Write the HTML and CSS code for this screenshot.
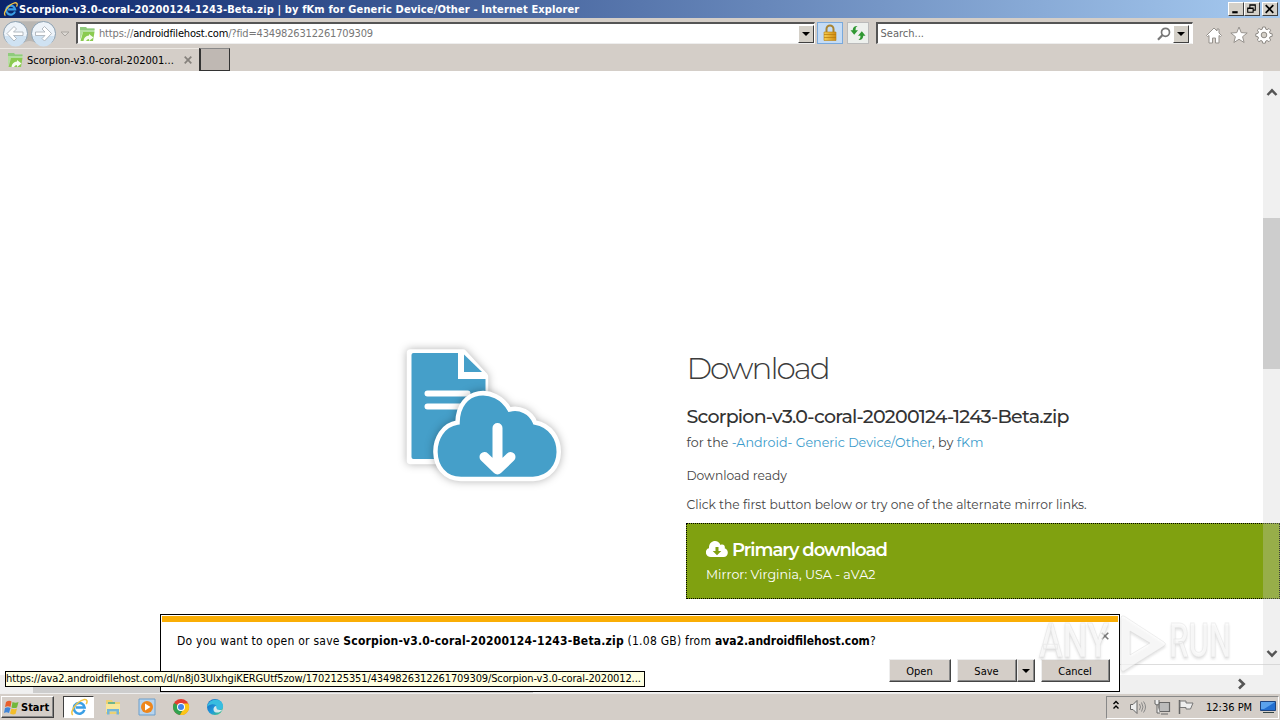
FILE: index.html
```html
<!DOCTYPE html>
<html lang="en">
<head>
<meta charset="utf-8">
<title>Scorpion-v3.0-coral-20200124-1243-Beta.zip</title>
<link rel="stylesheet" href="styles.css">
</head>
<body>
<svg width="0" height="0" class="defs">
  <defs>
    <linearGradient id="gold" x1="0" x2="1"><stop offset="0" stop-color="#f6cf52"/><stop offset="1" stop-color="#d08a10"/></linearGradient>
    <linearGradient id="edge" x1="0" y1="0" x2="1" y2="1"><stop offset="0" stop-color="#1b5fb8"/><stop offset=".55" stop-color="#1e9bdc"/><stop offset="1" stop-color="#4ccf70"/></linearGradient>
    <symbol id="ie" viewBox="0 0 20 20">
      <path d="M16 13.300A6 6 0 1 1 16.200 10.500H6.500" fill="none" stroke="#3a9fe6" stroke-width="2.800"/>
      <path d="M3.200 18.800C-1 16 7 4 15.500 1.800c4-.9 4 2.600 2.500 5" fill="none" stroke="#f3c544" stroke-width="1.700"/>
    </symbol>
    <symbol id="site" viewBox="0 0 16 16">
      <path d="M1 1h6l1 1.500h7.500V6H4L1 14z" fill="#b4dfa0"/><path d="M1 1h6l1 1.500h7.500V4H1z" fill="#8fcb7c"/>
      <path d="M1.500 15L4 6h11.500L14 15z" fill="#8acb50"/><path d="M4.500 15q.5-5 5.500-5.500V8l4.500 3.500L10 15v-2q-2 0-3 2z" fill="#f6fcf0"/>
    </symbol>
  </defs>
</svg>
<div class="desktop">
  <header class="titlebar">
    <svg class="title-icon"><use href="#ie"/></svg>
    <span class="title-text">Scorpion-v3.0-coral-20200124-1243-Beta.zip | by fKm for Generic Device/Other - Internet Explorer</span>
    <div class="window-buttons">
      <i class="wb"><svg viewBox="0 0 12 11"><path d="M3 8.500h5" stroke="#000" stroke-width="2"/></svg></i>
      <i class="wb"><svg viewBox="0 0 12 11"><path d="M4.500 4V1.500h5v5H8M4 2h6M2.500 4.500h5v4h-5zM2 5h6" fill="none" stroke="#000"/></svg></i>
      <i class="wb wb-close"><svg viewBox="0 0 12 11"><path d="M2.500 2l7 7M9.500 2l-7 7" stroke="#000" stroke-width="1.600"/></svg></i>
    </div>
  </header>

  <nav class="navbar">
    <svg class="nav-arrows" viewBox="0 0 56 27">
      <path d="M14 1.500C24 1 34 1 42 1.500v24C36 25 34 21 28.500 21S20 26 14 25.500z" fill="#b9b6b2"/>
      <g fill="#edf3f9" stroke="#8a9fb0"><circle cx="14.500" cy="13.500" r="12"/><circle cx="42.500" cy="13.500" r="12"/></g>
      <g fill="#cfe2f2"><path d="M4 16h21a10.500 10.500 0 0 1-21 0zM32 16h21a10.500 10.500 0 0 1-21 0z"/></g>
      <g fill="#fff" stroke="#a3abb3" stroke-width=".8"><path d="M6 13.500l7-7 2.500 2.500-3 3H22v3.500h-9.500l3 3-2.500 2.500z"/><path d="M50.500 13.500l-7-7L41 9l3 3h-9.500v3.500H44l-3 3 2.500 2.500z"/></g>
    </svg>
    <svg class="nav-drop" viewBox="0 0 10 6"><path d="M1 1h8L5 5z" fill="#dedad5" stroke="#aaa6a1"/></svg>
    <div class="field address">
      <svg class="site-icon"><use href="#site"/></svg>
      <span class="url">https://<b>androidfilehost.com</b>/?fid=4349826312261709309</span>
      <i class="drop"></i>
    </div>
    <i class="tool lock"><svg viewBox="0 0 16 18"><path d="M4.500 9V5a3.500 3.500 0 0 1 7 0v4" fill="none" stroke="#a88432" stroke-width="2"/><path d="M2 8h12v8.500H2z" fill="url(#gold)" stroke="#b88213" stroke-width=".6"/><path d="M2 10.500h12M2 13.500h12" stroke="#b67a0c" stroke-width=".7"/></svg></i>
    <i class="tool refresh"><svg viewBox="0 0 16 16"><path d="M7.500 1Q5.200 2 5.500 5.200H8L4.200 9.800.5 5.200h2.200Q3 .8 7.500 1zM8.500 15q2.300-1 2-4.200H8L11.800 6.200l3.700 4.600h-2.200q-.3 4.400-4.800 4.200z" fill="#2f9832"/></svg></i>
    <div class="field search">
      <span class="placeholder">Search...</span>
      <svg class="magnifier" viewBox="0 0 14 14"><circle cx="8.500" cy="5.300" r="4" fill="none" stroke="#777" stroke-width="1.700"/><path d="M5.500 8L1 12.700" stroke="#777" stroke-width="2.200"/></svg>
      <i class="drop"></i>
    </div>
    <div class="page-tools">
      <svg viewBox="0 0 18 18"><path d="M9 2L1.500 9.500l1 1L4 9.500V17h3.500v-5h3v5H14V9.500l1.500 1 1-1L14 7V3h-2v2z" fill="#fff" stroke="#96928d" stroke-width="1"/></svg>
      <svg viewBox="0 0 18 18"><path d="M9 1l2.200 5.600 6 .4-4.600 3.700 1.500 5.800L9 13.300l-5.100 3.200 1.500-5.800L.8 7l6-.4z" fill="#fff" stroke="#96928d"/></svg>
      <svg viewBox="0 0 18 18"><path d="M7.700 1h2.600l.5 2.200 1.300.5L14 2.500 15.700 4.200 14.500 6l.5 1.400 2.200.4v2.500l-2.200.5-.5 1.300 1.200 1.900-1.700 1.700-1.900-1.200-1.300.5-.5 2.200H7.700L7.200 15l-1.300-.5L4 15.700 2.300 14l1.200-1.900L3 10.800l-2.200-.5V7.800L3 7.300 3.500 6 2.300 4.200 4 2.500l1.900 1.200 1.300-.5z" fill="#fff" stroke="#8e8a85"/><circle cx="9" cy="9" r="2.800" fill="#d4d0c8" stroke="#8e8a85"/></svg>
    </div>
  </nav>

  <div class="tabs">
    <div class="tab"><svg class="site-icon"><use href="#site"/></svg><span class="tab-text">Scorpion-v3.0-coral-202001...</span><svg class="tab-x" viewBox="0 0 8 8"><path d="M.7.7l6.600 6.600M7.300.7L.7 7.300" stroke="#85817c" stroke-width="1.700"/></svg></div>
    <i class="new-tab"></i>
  </div>

  <main class="viewport">
    <section class="page">
      <svg class="hero" viewBox="0 0 190 170">
        <path class="sticker" d="M20.500 23h52.500l21.500 23.500v84h-74z" fill="#459fc9" stroke="#fff" stroke-width="7.500" stroke-linejoin="round"/>
        <path d="M21.500 25q0-2 2-2H72l23.500 24v82h-72q-2 0-2-2z" fill="#459fc9"/>
        <path d="M68 21h5l24 23v5H68z" fill="#fff"/>
        <path d="M74 24.500V42h18z" fill="#459fc9"/>
        <path d="M37.500 63.500h40M37.500 76.500h34" stroke="#fff" stroke-width="6" stroke-linecap="round"/>
        <path class="sticker" d="M71 149C37 148.500 38 97 67.500 92.500C68 57 106 55 119.500 79.500C130 77 141 82 145 92.500C177 98 177 147.500 143 149z" fill="#459fc9" stroke="#fff" stroke-width="4.500"/>
        <path d="M107.500 98v40M94.500 127l13 12.500L120.500 127" fill="none" stroke="#fff" stroke-width="10" stroke-linecap="round" stroke-linejoin="round"/>
      </svg>
      <div class="details">
        <h1><span>Download</span></h1>
        <h2><span>Scorpion-v3.0-coral-20200124-1243-Beta.zip</span></h2>
        <p class="for"><span>for the <a>-Android- Generic Device/Other</a>, by <a>fKm</a></span></p>
        <p class="ready"><span>Download ready</span></p>
        <p class="hint"><span>Click the first button below or try one of the alternate mirror links.</span></p>
        <div class="primary">
          <h3><svg viewBox="0 0 22 16"><path d="M5 16C-1.500 16-1.500 8 3 7.200 2.500-.5 12-2.500 14.500 4c3-1.500 5 1 4.200 3.300C23.500 9 22.500 16 17.500 16z" fill="#fff"/><path d="M9.500 6h3v4h2.800L11 14.300 6.700 10h2.800z" fill="#80a110"/></svg><span>Primary download</span></h3>
          <p><span>Mirror: Virginia, USA - aVA2</span></p>
        </div>
        <div class="next-panel"></div>
      </div>
    </section>
    <div class="hscroll"><i class="hthumb"></i><svg viewBox="0 0 10 12"><path d="M2 1.500L6.700 6 2 10.500" fill="none" stroke="#555" stroke-width="2.600"/></svg></div>
    <div class="vscroll">
      <svg viewBox="0 0 12 9"><path d="M1.500 7L6 2.300 10.500 7" fill="none" stroke="#555" stroke-width="2.500"/></svg>
      <i class="thumb"></i>
      <svg class="down" viewBox="0 0 12 9"><path d="M1.500 2L6 6.700 10.500 2" fill="none" stroke="#555" stroke-width="2.500"/></svg>
    </div>
    <div class="prompt">
      <div class="prompt-row"><span class="question">Do you want to open or save <b>Scorpion-v3.0-coral-20200124-1243-Beta.zip</b> (1.08 GB) from <b class="host">ava2.androidfilehost.com</b>?</span>
        <svg class="prompt-x" viewBox="0 0 8 8"><path d="M.7.7l6.600 6.600M7.300.7L.7 7.300" stroke="#777" stroke-width="1.600"/></svg></div>
      <div class="prompt-actions"><i class="btn open">Open</i><i class="btn save">Save</i><i class="btn arrow"></i><i class="btn cancel">Cancel</i></div>
    </div>
    <div class="status"><span>https://ava2.androidfilehost.com/dl/n8j03UlxhgiKERGUtf5zow/1702125351/4349826312261709309/Scorpion-v3.0-coral-2020012...</span></div>
    <svg class="watermark" viewBox="0 0 200 66">
      <text x="3" y="46" textLength="70" lengthAdjust="spacingAndGlyphs">ANY</text>
      <path d="M88 5l40 26q3 2 0 4L88 60q-3 1-3-2V7q0-3 3-2zM94 20v24l20-12z" fill-rule="evenodd"/>
      <text x="133" y="46" textLength="62" lengthAdjust="spacingAndGlyphs">RUN</text>
    </svg>
  </main>

  <footer class="taskbar">
    <div class="start"><svg viewBox="0 0 16 16"><path d="M2 3q3-2 5.500-.5L6.500 8Q4 6.500 1 8z" fill="#e8602c"/><path d="M8.500 3q3 1.500 6 0L13 8.500q-3 1-5.500 0z" fill="#72b83c"/><path d="M1 9q3-1.500 5.500 0L5 14q-2.500-1.500-5 0z" fill="#3f85d8"/><path d="M7.500 9.500q3 1.500 5.500 0L11.500 15Q9 16 6 14.500z" fill="#f2bd29"/></svg><b>Start</b></div>
    <div class="task-active"><svg class="task-ie"><use href="#ie"/></svg></div>
    <div class="quick">
      <svg viewBox="0 0 18 18"><path d="M2 2h6l1 2h7v12H2z" fill="#edd174"/><path d="M2 6h14v8H2z" fill="#f8e79b"/><path d="M3 16.500V11h12v5.500h-2.500v-3h-7v3z" fill="#74b5d8"/><path d="M4 4h7v2H4z" fill="#6fb48d"/></svg>
      <svg viewBox="0 0 18 18"><path d="M1 1h16v16H1z" fill="#b7d4ee" stroke="#6c9fcb"/><circle cx="9" cy="9" r="6" fill="#ee861b"/><path d="M7 5.500l5.500 3.500L7 12.500z" fill="#fff"/></svg>
      <svg viewBox="0 0 18 18"><circle cx="9" cy="9" r="8" fill="#e23d30"/><path d="M2.100 5A8 8 0 0 0 8 17l3.600-6.500L9 9z" fill="#31a350"/><path d="M16.300 5.500A8 8 0 0 1 8 17l4-7V5.500z" fill="#fbc616"/><circle cx="9" cy="9" r="4" fill="#fff"/><circle cx="9" cy="9" r="3" fill="#4285e8"/></svg>
      <svg viewBox="0 0 18 18"><circle cx="9" cy="9" r="8" fill="url(#edge)"/><path d="M1 9C2 3 8 .5 13 2.300c4 1.700 5.500 7 2.500 9-2 1-5 .7-5-1C12 6 5 4.500 1 9z" fill="#37bde0"/><path d="M10.500 9.800c0 2 3 3 6 1.700-2 3.500-8 4.500-9 .5-.3-2 1-4 2.700-4z" fill="#d5e9ec"/></svg>
    </div>
    <div class="tray">
      <svg class="chev" viewBox="0 0 8 10"><path d="M1.500 4L4 1.500 6.500 4M1.500 8.500L4 6l2.500 2.500" fill="none" stroke="#000" stroke-width="1.400"/></svg>
      <svg class="sys" viewBox="0 0 18 16"><path d="M.5 5.500H3L7 1.500v13L3 10.500H.5z" fill="#eee" stroke="#666"/><path d="M9.500 5q2 3 0 6M11.500 3.500q3 4.500 0 9M13.500 2.500q4 5.500 0 11" fill="none" stroke="#888"/></svg>
      <svg class="sys" viewBox="0 0 18 16"><path d="M5 3.500h10.500v9H5zM7 15h7" fill="#bbb" stroke="#666" stroke-width="1.200"/><path d="M1 1v4q2 2 4 0V1M3 6v8h3" fill="#eee" stroke="#666"/></svg>
      <svg class="sys flag" viewBox="0 0 18 16"><path d="M1.500 1v14" stroke="#666" stroke-width="1.500"/><path d="M2 2h6v2h7l-2.500 6H8V8.500H2z" fill="#eee" stroke="#777"/></svg>
      <span class="clock">12:36 PM</span>
      <svg class="desk" viewBox="0 0 16 14"><path d="M.5 1.500h15v9H.5z" fill="#236fd0" stroke="#1e447e"/><path d="M1 2h14L4 9H1z" fill="#5aa2ec"/><path d="M3 12.500h11" stroke="#344"/></svg>
    </div>
  </footer>
</div>
</body>
</html>
```
FILE: styles.css
```css
* { box-sizing: border-box; }
body { margin: 0; overflow: hidden; font-family: "DejaVu Sans Condensed", "DejaVu Sans", sans-serif; font-size: 11px; color: #000; }
i { font-style: normal; }
svg { display: block; flex: none; }
.defs { position: absolute; }
span { white-space: nowrap; }
.desktop { width: 1280px; height: 720px; display: flex; flex-direction: column; background: #d4d0c8; }

.titlebar { height: 18px; display: flex; align-items: center; padding: 0 2px 0 3px; background: linear-gradient(90deg, #0a246a, #a6caf0); color: #fff; font-weight: bold; }
.title-icon { width: 15px; height: 16px; margin-right: 1px; }
.title-text { flex: 1; letter-spacing: .13px; }
.window-buttons { display: flex; }
.wb { width: 16px; height: 14px; background: #d4d0c8; border: 1px solid; border-color: #fff #404040 #404040 #fff; }
.wb svg { width: 13px; height: 12px; }
.wb-close { margin-left: 2px; }

.navbar { height: 30px; display: flex; align-items: flex-start; padding: 4px 7px 0 1px; background: #d4cec8; }
.nav-arrows { width: 56px; height: 27px; margin-top: -2px; }
.nav-drop { width: 10px; height: 6px; margin: 9px 6px 0 3px; }
.field { height: 22px; display: flex; align-items: center; background: #fff; border: 1px solid; border-width: 2px 1px 1px 2px; border-color: #555 #fff #eee #555; }
.address { width: 740px; padding: 0 0 0 1px; }
.site-icon { width: 16px; height: 16px; margin-right: 4px; }
.url { flex: 1; color: #777; letter-spacing: -.17px; }
.url b { color: #000; font-weight: normal; }
.drop { width: 16px; height: 18px; background: #d4d0c8; border: 1px solid; border-color: #fff #404040 #404040 #fff; display: flex; align-items: center; justify-content: center; }
.drop::after, .arrow::after { content: ""; border: 4px solid transparent; border-top-color: #000; border-bottom: 0; }
.tool { width: 26px; height: 22px; margin-left: 2px; border: 1px solid #79a9dc; background: #c5dcf5; display: flex; align-items: center; justify-content: center; }
.lock svg { width: 16px; height: 18px; }
.refresh { width: 22px; margin-left: 4px; background: #edf0ed; border-color: #bbb; }
.refresh svg { width: 16px; height: 16px; }
.search { width: 318px; margin-left: 7px; padding: 0 3px 0 3px; color: #666; }
.placeholder { flex: 1; }
.magnifier { width: 14px; height: 14px; margin-right: 2px; }
.page-tools { display: flex; gap: 7px; margin: 4px 0 0 12px; }
.page-tools svg { width: 18px; height: 18px; }

.tabs { height: 23px; display: flex; background: #d4cec8; }
.tab { width: 199px; display: flex; align-items: center; padding-left: 7px; border-top: 1px solid #ece8e3; }
.tab-text { flex: 1; }
.tab-x { width: 8px; height: 8px; margin-right: 7px; }
.new-tab { width: 31px; height: 23px; background: #bfb8b3; border: 1px solid #333; border-left-width: 2px; border-top-color: #888; }

.viewport { position: relative; height: 622px; display: grid; grid-template: 604px 18px / 1263px 17px; background: #fff; }
.page { grid-column: 1 / 3; display: flex; overflow: hidden; grid-row: 1; }
.hero { width: 190px; height: 170px; margin: 259px 106px 0 390px; }
.sticker { filter: drop-shadow(0 0 4px rgba(0,0,0,.3)); }
.details { width: 594px; flex: none; padding-top: 276px; font-family: Montserrat, sans-serif; font-size: 12.68px; color: #444; }
.details > h1, .details > h2, .details > p { padding-left: .5px; }
h1, h2, h3, p { margin: 0; white-space: nowrap; }
h1 { font: 300 31px/42px Montserrat, sans-serif; color: #3c3c3c; letter-spacing: -2px; }
h2 { margin-top: 16px; font: 500 19px/24px Montserrat, sans-serif; color: #333; letter-spacing: -.77px; }
.details p { line-height: 18px; }
.details .for { margin-top: 5px; }
.details a { color: #3b9bcb; }
.details .ready, .details .hint { font-size: 12.25px; }
.ready { margin-top: 15px; }
.hint { margin-top: 11px; }
.primary { height: 76px; margin-top: 9px; padding: 14px 19px; background: #80a110; border: 1px dotted #000; color: #fff; }
h3 { display: flex; align-items: center; gap: 4px; font: 600 18px/24px Montserrat, sans-serif; letter-spacing: -1px; }
h3 svg { width: 22px; height: 16px; margin-bottom: 2px; }
.primary p { margin-top: 4px; }
.next-panel { margin-top: 65px; border-top: 1px solid #ddd; }
.vscroll { grid-column: 2; grid-row: 1 / 3; z-index: 1; background: rgba(205,205,205,.3); display: flex; flex-direction: column; align-items: center; padding-top: 17px; }
.vscroll svg { width: 12px; height: 9px; }
.thumb { width: 17px; height: 151px; margin-top: 121px; background: #cdcdcd; }
.vscroll .down { margin-top: 280px; }
.hscroll { grid-column: 1; grid-row: 2; background: #f0f0f0; display: flex; align-items: center; justify-content: space-between; padding: 0 16px 0 33px; }
.hthumb { width: 500px; height: 18px; background: #cdcdcd; }
.hscroll svg { width: 10px; height: 12px; }

.prompt { position: absolute; z-index: 2; left: 160px; top: 543px; width: 960px; height: 78px; background: #fff; border: 1px solid #000; }
.prompt::before { content: ""; display: block; height: 6px; margin: 1px 1px 0; background: #faae05; }
.prompt-row { display: flex; justify-content: space-between; padding: 8px 10px 0 16px; font-size: 12px; height: 37px; line-height: 22px; }
.question { letter-spacing: .25px; }
.question b { letter-spacing: .2px; }
.question .host { letter-spacing: 0; }
.prompt-x { width: 8px; height: 8px; margin-top: 2px; }
.prompt-actions { display: flex; justify-content: flex-end; padding-right: 9px; }
.btn { height: 23px; display: flex; align-items: center; justify-content: center; padding: 2px 1px 0 0; background: #d4cec8; border: 1px solid; border-color: #eee #444 #444 #eee; box-shadow: inset -1px -1px #888; }
.open { width: 62px; margin-right: 6px; }
.save { width: 60px; }
.arrow { width: 18px; padding: 0; }
.cancel { width: 69px; margin-left: 6px; }
.status { position: absolute; z-index: 3; left: 5px; top: 600px; width: 640px; height: 16px; background: #ffffe1; border: 1px solid #000; line-height: 14px; overflow: hidden; letter-spacing: -.12px; }
.watermark { position: absolute; z-index: 4; left: 1036px; top: 540px; width: 200px; height: 66px; overflow: visible; fill: rgba(255,255,255,.65); stroke: rgba(210,210,210,.35); stroke-width: 1px; font: 500 48px Roboto, sans-serif; filter: drop-shadow(0 2px 1px rgba(120,120,120,.3)); }

.taskbar { height: 27px; display: flex; align-items: center; background: #d4cec8; border-top: 1px solid #eee; }
.start { width: 53px; height: 22px; margin-left: 1px; display: flex; align-items: center; gap: 1px; padding-left: 2px; border: 1px solid; border-color: #fff #404040 #404040 #fff; box-shadow: inset -1px -1px #888; }
.start svg { width: 16px; height: 16px; }
.task-active { width: 31px; height: 22px; margin-left: 9px; background: #fff; border: 1px solid; border-color: #404040 #fff #fff #404040; display: flex; align-items: center; justify-content: center; }
.task-ie { width: 18px; height: 18px; }
.quick { display: flex; gap: 16px; margin-left: 10px; flex: 1; }
.quick svg { width: 18px; height: 18px; }
.tray { width: 173px; height: 23px; margin-right: 1px; display: flex; align-items: center; border: 1px solid; border-color: #888 #fff #fff #888; padding-left: 5px; }
.chev { width: 8px; height: 10px; margin-right: 10px; margin-bottom: 4px; }
.sys { width: 18px; height: 16px; margin-right: 6px; }
.flag { margin-right: 10px; }
.clock { width: 54px; }
.desk { width: 16px; height: 14px; }
```
